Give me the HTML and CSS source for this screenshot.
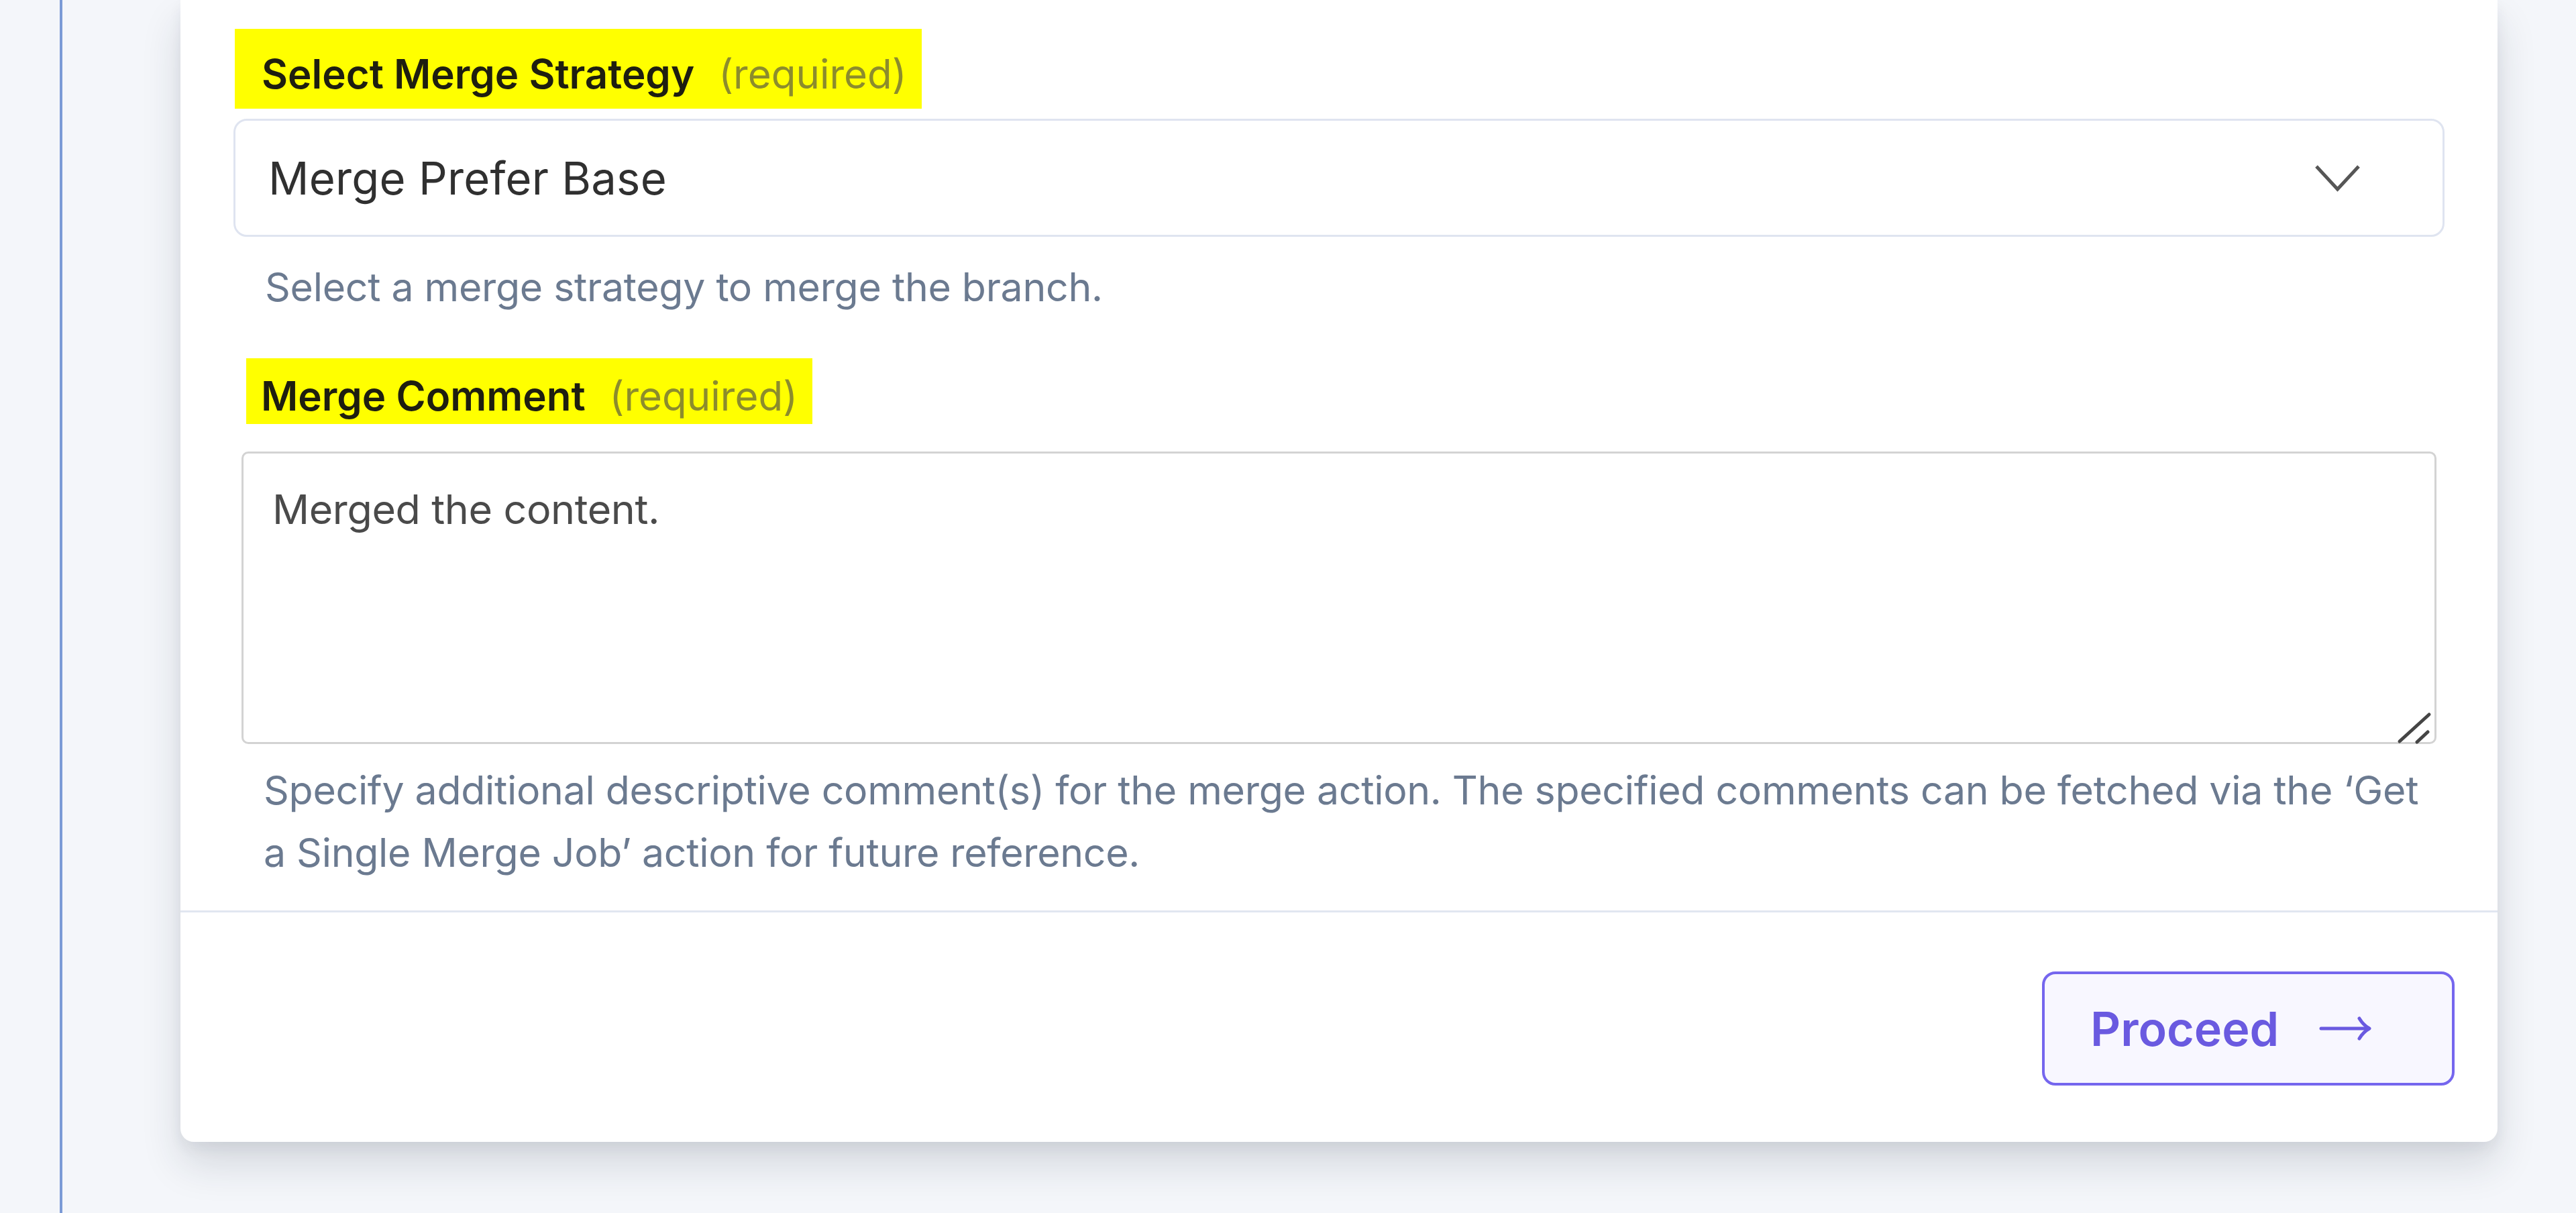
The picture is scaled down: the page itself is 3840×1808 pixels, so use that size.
FILE: index.html
```html
<!DOCTYPE html>
<html lang="en">
<head>
<meta charset="utf-8">
<title>Merge Branch</title>
<link rel="stylesheet" href="styles.css">
</head>
<body>
<div class="page">
  <div class="rail"></div>
  <main class="card">
    <div class="card-body">
      <label class="label label-strategy">
        <span class="label-text">Select Merge Strategy</span>
        <span class="req">(required)</span>
      </label>
      <div class="select">
        <span class="select-value">Merge Prefer Base</span>
        <svg class="chevron" width="69" height="42" viewBox="0 0 69 42" aria-hidden="true">
          <polyline points="3,4 34.5,38 66,4" fill="none" stroke="#565656" stroke-width="5" stroke-linejoin="miter"/>
        </svg>
      </div>
      <p class="help help-strategy">Select a merge strategy to merge the branch.</p>

      <label class="label label-comment">
        <span class="label-text">Merge Comment</span>
        <span class="req">(required)</span>
      </label>
      <div class="textarea-wrap">
        <textarea class="textarea">Merged the content.</textarea>
        <svg class="grip" width="60" height="50" viewBox="0 0 60 50" aria-hidden="true">
          <line x1="5" y1="46" x2="49" y2="6" stroke="#454545" stroke-width="5" stroke-linecap="round"/>
          <line x1="31" y1="47" x2="47" y2="32" stroke="#454545" stroke-width="5" stroke-linecap="round"/>
        </svg>
      </div>
      <p class="help help-comment">Specify additional descriptive comment(s) for the merge action. The specified comments can be fetched via the ‘Get a Single Merge Job’ action for future reference.</p>
    </div>
    <div class="card-footer">
      <button class="btn-proceed" type="button">
        <span>Proceed</span>
        <svg class="arrow" width="78" height="40" viewBox="0 0 78 40" aria-hidden="true">
          <path d="M3 20 H74" fill="none" stroke="#6a5ae0" stroke-width="5" stroke-linecap="round"/>
          <path d="M60 5 Q66 15 75 20 Q66 25 60 35" fill="none" stroke="#6a5ae0" stroke-width="5" stroke-linecap="round" stroke-linejoin="round"/>
        </svg>
      </button>
    </div>
  </main>
</div>
</body>
</html>
```

FILE: styles.css
```css
* { box-sizing: border-box; }

html, body {
  margin: 0;
  padding: 0;
  height: 1808px;
  overflow: hidden;
  background: #f4f6fa;
  font-family: Inter, "Noto Sans", "Liberation Sans", sans-serif;
}

.page {
  display: flex;
  align-items: flex-start;
  height: 1808px;
  padding-left: 89px;
}

.rail {
  width: 4px;
  align-self: stretch;
  background: #7b9ad6;
}

.card {
  margin-left: 176px;
  width: 3454px;
  background: #ffffff;
  border-radius: 0 0 20px 20px;
  box-shadow: 0 34px 60px rgba(30, 40, 60, 0.14), 0 10px 20px rgba(30, 40, 60, 0.06);
}

.card-body {
  display: flex;
  flex-direction: column;
  padding: 43px 79px 40px 79px;
}

.label {
  align-self: flex-start;
  display: inline-flex;
  align-items: center;
  background: #ffff00;
  font-size: 60px;
  line-height: 72px;
}

.label-text {
  font-weight: 600;
  color: #1e1e10;
}

.req {
  margin-left: 36px;
  font-weight: 400;
  color: #8c8c2c;
}

.label-strategy {
  margin-left: 2px;
  padding: 31px 22px 16px 40px;
}

.label-comment {
  margin-top: 60px;
  margin-left: 19px;
  padding: 20px 22px 6px 22px;
}

.select {
  margin-top: 15px;
  height: 176px;
  display: flex;
  align-items: center;
  justify-content: space-between;
  padding: 0 122px 0 49px;
  border: 3px solid #dfe4f0;
  border-radius: 20px;
  background: #ffffff;
}

.select-value {
  font-size: 67px;
  color: #303030;
  letter-spacing: 0.2px;
}

.help {
  margin: 0;
  font-size: 59px;
  letter-spacing: -0.3px;
  line-height: 93px;
  color: #6b7a90;
}

.help-strategy {
  margin: 28px 0 0 47px;
}

.help-comment {
  margin: 22px 12px 0 45px;
}

.textarea-wrap {
  position: relative;
  margin: 41px 12px 0 12px;
  height: 436px;
}

.textarea {
  display: block;
  width: 100%;
  height: 100%;
  margin: 0;
  padding: 43px 43px;
  border: 3px solid #d3d3d3;
  border-radius: 10px;
  resize: none;
  outline: none;
  background: #ffffff;
  font-family: Inter, "Noto Sans", "Liberation Sans", sans-serif;
  font-size: 61px;
  letter-spacing: -0.4px;
  line-height: 80px;
  color: #4a4a4a;
}

.grip {
  position: absolute;
  right: 0;
  bottom: 0;
}

.card-footer {
  display: flex;
  justify-content: flex-end;
  padding: 88px 64px 84px 64px;
  border-top: 3px solid #e1e6f0;
}

.btn-proceed {
  display: flex;
  align-items: center;
  gap: 60px;
  width: 615px;
  height: 170px;
  padding: 0 0 0 68px;
  border: 4px solid #7566ee;
  border-radius: 20px;
  background: #f8f7ff;
  color: #6a5ae0;
  font-family: Inter, "Noto Sans", "Liberation Sans", sans-serif;
  font-size: 70px;
  font-weight: 600;
  cursor: pointer;
}

.arrow {
  flex: none;
}
```
